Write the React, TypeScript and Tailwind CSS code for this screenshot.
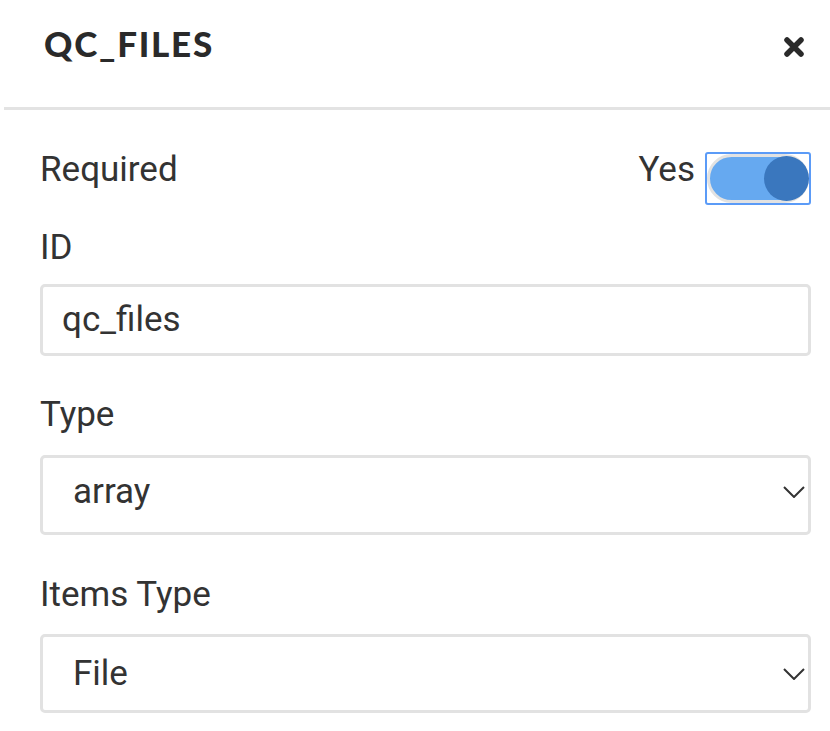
export default function App() {
  const label = "block text-[35px] leading-[40px] text-[#333]";

  return (
    <div className="w-[830px] h-[731px] bg-white overflow-hidden font-['Roboto',sans-serif]">
      <div className="ml-[4px] h-[110px] border-b-[3px] border-[#e3e3e3] flex items-start justify-between pl-[40px] pr-[25px] pt-[23px]">
        <h1 className="font-['Lato',sans-serif] font-black text-[35px] leading-[40px] tracking-[0.05em] text-[#2a2a2a]">
          QC_FILES
        </h1>
        <button className="mt-[13px] w-[22px] h-[22px] text-[#2a2a2a]">
          <svg viewBox="0 0 22 22" width="22" height="22">
            <path d="M4 4 L18 18 M18 4 L4 18" stroke="currentColor" strokeWidth="5.5" strokeLinecap="round" />
          </svg>
        </button>
      </div>

      <div className="pl-[40px] pr-[19px] pt-[40px]">
        <div className="flex items-start justify-between">
          <span className={label}>Required</span>
          <div className="flex items-start gap-[10px]">
            <span className={label}>Yes</span>
            <button className="mt-[2px] w-[106px] h-[53px] border-2 border-[#5b9bf7] rounded-[3px] p-0">
              <div className="w-full h-full rounded-full border-[3px] border-[#e2e2e2] bg-[#66a9f0] flex items-center justify-end">
                <div className="-mr-[3px] w-[45px] h-[45px] rounded-full bg-[#3a77be]" />
              </div>
            </button>
          </div>
        </div>

        <label className={`${label} mt-[23px]`}>ID</label>
        <div className="mt-[16px] h-[72px] border-[3px] border-[#e2e2e2] rounded-[5px] flex items-center pl-[19px] text-[35px] leading-[40px] text-[#333]">
          qc_files
        </div>

        <label className={`${label} mt-[39px]`}>Type</label>
        <div className="mt-[20px] h-[80px] border-[3px] border-[#e2e2e2] rounded-[5px] flex items-center justify-between pl-[30px] pr-[3px] pb-[6px] text-[35px] leading-[40px] text-[#333]">
          <span>array</span>
          <Chevron />
        </div>

        <label className={`${label} mt-[40px]`}>Items Type</label>
        <div className="mt-[19px] h-[79px] border-[3px] border-[#e2e2e2] rounded-[5px] flex items-center justify-between pl-[30px] pr-[3px] text-[35px] leading-[40px] text-[#333]">
          <span>File</span>
          <Chevron />
        </div>
      </div>
    </div>
  );
}

function Chevron() {
  return (
    <svg viewBox="0 0 22 12" width="22" height="12" className="text-[#333]">
      <path d="M1 1 L11 11 L21 1" fill="none" stroke="currentColor" strokeWidth="2" />
    </svg>
  );
}
